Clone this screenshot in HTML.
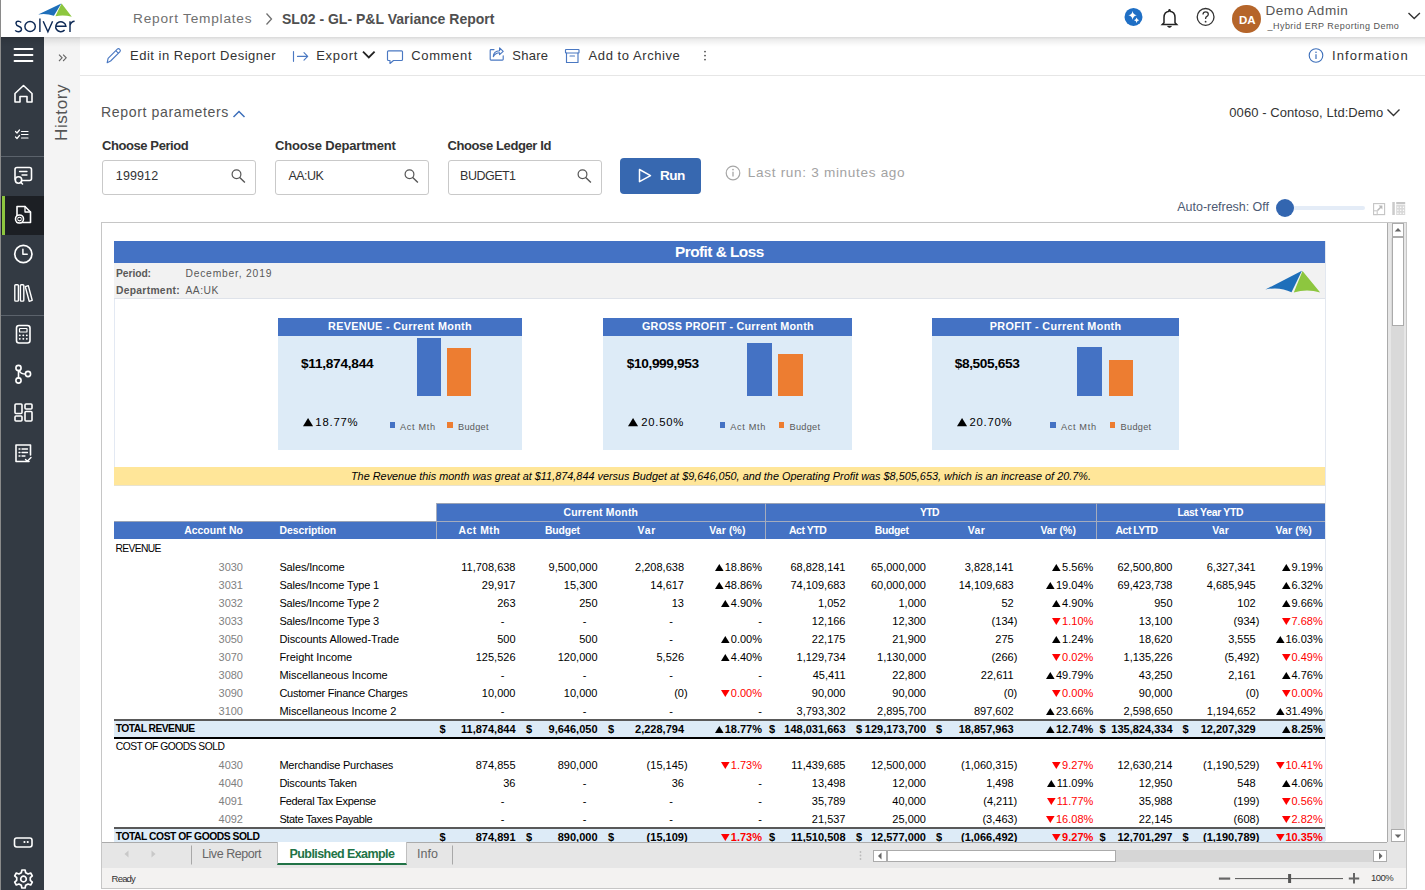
<!DOCTYPE html><html><head><meta charset="utf-8"><title>SL02 - GL- P&amp;L Variance Report</title><style>
*{margin:0;padding:0;box-sizing:border-box}
html,body{width:1425px;height:890px;overflow:hidden;background:#fff;font-family:"Liberation Sans", sans-serif;position:relative}
.t{position:absolute;white-space:nowrap}
.r{position:absolute}
svg{position:absolute;overflow:visible}
</style></head><body>
<div class="r" style="left:0px;top:0px;width:1px;height:890px;background:#8a8a8a;"></div>
<div class="r" style="left:1px;top:37px;width:43px;height:853px;background:#333a43;"></div>
<div class="r" style="left:1px;top:156px;width:43px;height:1px;background:#5b626b;"></div>
<div class="r" style="left:1px;top:315px;width:43px;height:1px;background:#5b626b;"></div>
<div class="r" style="left:1px;top:196px;width:43px;height:39px;background:#1c1f24;"></div>
<div class="r" style="left:2px;top:196px;width:3px;height:39px;background:#8dc63f;"></div>
<div class="r" style="left:44px;top:37px;width:36px;height:853px;background:#f4f4f4;"></div>
<div class="r" style="left:1px;top:0px;width:1424px;height:37px;background:#fff;"></div>
<div class="r" style="left:1px;top:37px;width:1424px;height:10px;background:linear-gradient(rgba(0,0,0,0.15),rgba(0,0,0,0.075) 25%,rgba(0,0,0,0.02) 75%,rgba(0,0,0,0));"></div>
<svg style="left:0px;top:0px;" width="44" height="890" viewBox="0 0 44 890">
<g stroke="#fff" fill="none" stroke-width="1.6" stroke-linecap="round" stroke-linejoin="round">
<path d="M14.5 49H32.5M14.5 55H32.5M14.5 61H32.5" stroke-width="1.8"/>
<path d="M15 93.5L23.5 85.5L32 93.5V102H27V96.5H20V102H15Z"/>
<path d="M15.5 131.5L17 133L19.5 130M15.5 137L17 138.5L19.5 135.5M21.5 131.5H28M21.5 134.5H28M21.5 138H28" stroke-width="1.2"/>
<rect x="15" y="167.5" width="16.5" height="13" rx="2"/>
<path d="M19.5 171.5H27M22 175H27" stroke-width="1.3"/>
<circle cx="18.5" cy="180" r="3.2" fill="#333a43"/>
<path d="M20.8 182.3L22.5 184"/>
<path d="M17 222.5V206.5H25L30.5 212V222.5Z"/>
<path d="M25 206.5V212H30.5" stroke-width="1.3"/>
<circle cx="19.5" cy="219" r="4" fill="#1c1f24"/>
<path d="M17.8 218.3A2 2 0 0 1 21.3 218.3M21.3 219.8A2 2 0 0 1 17.8 219.8" stroke-width="1.1"/>
<circle cx="23.35" cy="254" r="8.6" stroke-width="1.7"/>
<path d="M22.9 249.2V254.3H27.2" stroke-width="1.5"/>
<rect x="14.8" y="284.7" width="3.6" height="16.4" rx="0.9" stroke-width="1.4"/>
<rect x="20.4" y="284.7" width="3.4" height="16.4" rx="0.9" stroke-width="1.4"/>
<path d="M25.3 286.6L28.3 285.6L32.2 300.3L29.2 301.3Z" stroke-width="1.4"/>
<rect x="16.5" y="325.5" width="13.5" height="17.5" rx="2.5"/>
<rect x="19.5" y="328.5" width="7.5" height="3.5" rx="0.6" stroke-width="1.2"/>
<path d="M19.7 335.3H19.9M23.2 335.3H23.4M26.7 335.3H26.9M19.7 338.8H19.9M23.2 338.8H23.4M26.7 338.8H26.9" stroke-width="1.7"/>
<circle cx="18.5" cy="368" r="2.6"/>
<circle cx="18.5" cy="380.5" r="2.6"/>
<circle cx="28" cy="374" r="2.6"/>
<path d="M18.5 370.6V377.9M19.8 371.5Q21 374 25.4 374"/>
<rect x="15" y="404" width="7" height="9.5" rx="1"/>
<rect x="15" y="416" width="7" height="5" rx="1"/>
<rect x="25" y="404" width="7" height="5" rx="1"/>
<rect x="25" y="411.5" width="7" height="9.5" rx="1"/>
<path d="M29 461.5H16V445H30.5V455" />
<path d="M19 449H20M22 449H27.5M19 452.5H20M22 452.5H27.5M19 456H20M22 456H25" stroke-width="1.3"/>
<path d="M25.5 459.5L27.3 461.3L31 457.5" stroke-width="1.4"/>
<rect x="14.5" y="838" width="17.5" height="9" rx="2.2"/>
<path d="M24.3 842H24.6M27.6 842H27.9" stroke-width="1.8"/>
</g>
<g transform="translate(23.5 879)">
<path fill="none" stroke="#fff" stroke-width="1.7" stroke-linejoin="round" d="M-1.6 -9 H1.6 L2.2 -6.3 L4.6 -5 L7.2 -6 L8.8 -3.2 L6.8 -1.3 V1.3 L8.8 3.2 L7.2 6 L4.6 5 L2.2 6.3 L1.6 9 H-1.6 L-2.2 6.3 L-4.6 5 L-7.2 6 L-8.8 3.2 L-6.8 1.3 V-1.3 L-8.8 -3.2 L-7.2 -6 L-4.6 -5 L-2.2 -6.3 Z"/>
<circle r="2.8" fill="none" stroke="#fff" stroke-width="1.7"/>
</g>
</svg>
<svg style="left:57px;top:51.5px;" width="12" height="12" viewBox="0 0 12 12"><path d="M2 2.6L5.1 5.8L2 9M6.1 2.6L9.2 5.8L6.1 9" stroke="#666" fill="none" stroke-width="1.1"/></svg>
<div class="t" style="left:47px;top:141px;width:30px;height:0;"><div style="position:absolute;left:0;top:0;transform:rotate(-90deg);transform-origin:0 0;font-size:17px;color:#555;line-height:30px;letter-spacing:0.6px">History</div></div>
<svg style="left:0px;top:0px;" width="80" height="37" viewBox="0 0 80 37">
<path d="M38.2 14.6 L61.3 3.4 L53.9 15.8 Q46 13.2 38.2 14.6Z" fill="#1e6fba"/>
<path d="M61.6 3.6 L71.8 16.8 Q63.5 14.6 55.4 16.3Z" fill="#8dc63f"/>
<g fill="none" stroke="#0e2a56" stroke-width="1.45">
<path d="M21.2 22.6 Q19.8 21.1 18.2 21.1 Q16 21.2 16 23.5 Q16.2 25.4 18.6 26.2 Q21.6 27.2 21.5 29.4 Q21.2 31.8 18.4 31.8 Q16.3 31.8 15.2 30.4"/>
<ellipse cx="30.1" cy="26.5" rx="5.2" ry="5"/>
<path d="M39.9 18.4V31.9"/>
<path d="M43.2 21.3L47.9 31.7L52.6 21.3"/>
<path d="M55.9 26.3H65.9A5.1 5 0 1 0 64.6 30.1"/>
<path d="M70 21.2V31.9M70 25.5Q71.2 21.4 74.6 21.3"/>
</g>
</svg>
<div class="t" style="top:8.85px;font-size:13.7px;font-weight:400;color:#707070;line-height:20px;letter-spacing:0.772px;left:133.00px;">Report Templates</div>
<svg style="left:264px;top:12px;" width="10" height="14" viewBox="0 0 10 14"><path d="M2.5 1.5L7.5 7L2.5 12.5" stroke="#707070" fill="none" stroke-width="1.3"/></svg>
<div class="t" style="top:8.85px;font-size:14px;font-weight:700;color:#4f4f4f;line-height:20px;letter-spacing:0.010px;left:282.00px;">SL02 - GL- P&amp;L Variance Report</div>
<svg style="left:1120px;top:0px;" width="100" height="37" viewBox="0 0 100 37">
<circle cx="13.5" cy="16.9" r="9" fill="#1f6fc5"/>
<path fill="#fff" d="M12.6 10.9 Q13.2 14.6 16.8 15.3 Q13.2 16 12.6 19.7 Q12 16 8.4 15.3 Q12 14.6 12.6 10.9Z"/>
<path fill="#fff" d="M16.6 17.5 Q17 19.8 19.2 20.2 Q17 20.6 16.6 22.9 Q16.2 20.6 14 20.2 Q16.2 19.8 16.6 17.5Z"/>
<path fill="none" stroke="#222" stroke-width="1.5" d="M49.3 11.2 Q44 11.7 44 17.5 V22.7 L42.3 24.4 H56.7 L55 22.7 V17.5 Q55 11.7 49.7 11.2"/>
<circle cx="49.5" cy="10.3" r="1.2" fill="#222"/>
<path d="M47.6 26.4 Q49.5 28.2 51.4 26.4Z" fill="#222" stroke="#222" stroke-width="1"/>
<circle cx="85.6" cy="16.9" r="8.4" fill="none" stroke="#333" stroke-width="1.3"/>
<path d="M83 14.5 Q83 11.8 85.7 11.8 Q88.3 11.8 88.3 14.2 Q88.3 15.8 86.6 16.6 Q85.6 17.2 85.6 18.5V19" fill="none" stroke="#333" stroke-width="1.3"/>
<circle cx="85.6" cy="21.7" r="0.9" fill="#333"/>
</svg>
<div class="r" style="left:1232.3px;top:4.7px;width:28.6px;height:28.6px;border-radius:50%;background:#b5652a"></div>
<div class="t" style="top:10.00px;font-size:11.5px;font-weight:700;color:#fff;line-height:20px;left:847.30px;width:800px;text-align:center;">DA</div>
<div class="t" style="top:0.90px;font-size:13.5px;font-weight:400;color:#555;line-height:20px;letter-spacing:0.553px;left:1265.50px;">Demo Admin</div>
<div class="t" style="top:16.40px;font-size:9px;font-weight:400;color:#555;line-height:20px;letter-spacing:0.458px;left:1267.50px;">_Hybrid ERP Reporting Demo</div>
<svg style="left:1404px;top:10px;" width="18" height="12" viewBox="0 0 18 12"><path d="M4.5 3L10.2 8.6L15.9 3" stroke="#333" fill="none" stroke-width="1.4"/></svg>
<div class="r" style="left:80px;top:75px;width:1345px;height:1px;background:#e6e6e6;"></div>
<svg style="left:100px;top:40px;" width="620" height="30" viewBox="0 0 620 30"><g stroke="#4a78c2" fill="none" stroke-width="1.15" stroke-linecap="round" stroke-linejoin="round">
<path d="M7.2 22.7 L8.1 18.4 L17.3 9.2 Q18.5 8 19.8 9.3 Q21 10.6 19.8 11.8 L10.6 21 Z M15.8 10.7 L18.3 13.2"/>
<path d="M193.5 11.5V21.3M197.5 16.4H207.5M204 12.7L207.7 16.4L204 20.1"/>
<path d="M288.5 10.8 H301.5 Q302.5 10.8 302.5 11.8 V19.5 Q302.5 20.5 301.5 20.5 H293.5 L290 23.5 V20.5 H288.5 Q287.5 20.5 287.5 19.5 V11.8 Q287.5 10.8 288.5 10.8Z"/>
<path d="M394 9.6 H391 Q390.2 9.6 390.2 10.4 V19.3 Q390.2 20.1 391 20.1 H402.4 Q403.2 20.1 403.2 19.3 V15.8"/>
<path d="M393.3 16.6 Q393.5 10.9 399.6 10.7 V7.9 L403.2 11.3 L399.6 14.7 V12.7 Q395.6 12.7 393.3 16.6Z"/>
<rect x="465.5" y="9.5" width="13.5" height="3.5" rx="0.5"/>
<path d="M466.5 13 V22.5 H478 V13 M470 16 H474.5"/>
</g>
<path d="M263 11.6L268.8 17.4L274.6 11.6" stroke="#222" fill="none" stroke-width="1.8"/>
<circle cx="605" cy="11.6" r="0.95" fill="#555"/><circle cx="605" cy="15.6" r="0.95" fill="#555"/><circle cx="605" cy="19.6" r="0.95" fill="#555"/>
</svg>
<div class="t" style="top:45.50px;font-size:13px;font-weight:400;color:#333;line-height:20px;letter-spacing:0.510px;left:130.00px;">Edit in Report Designer</div>
<div class="t" style="top:45.50px;font-size:13px;font-weight:400;color:#333;line-height:20px;letter-spacing:0.728px;left:316.20px;">Export</div>
<div class="t" style="top:45.50px;font-size:13px;font-weight:400;color:#333;line-height:20px;letter-spacing:0.661px;left:411.20px;">Comment</div>
<div class="t" style="top:45.50px;font-size:13px;font-weight:400;color:#333;line-height:20px;letter-spacing:0.260px;left:512.30px;">Share</div>
<div class="t" style="top:45.50px;font-size:13px;font-weight:400;color:#333;line-height:20px;letter-spacing:0.568px;left:588.60px;">Add to Archive</div>
<svg style="left:1300px;top:40px;" width="30" height="30" viewBox="0 0 30 30"><circle cx="16" cy="15.5" r="6.8" fill="none" stroke="#3d6fba" stroke-width="1.1"/><path d="M16 14.3V19" stroke="#3d6fba" stroke-width="1.2"/><circle cx="16" cy="12.3" r="0.8" fill="#3d6fba"/></svg>
<div class="t" style="top:45.50px;font-size:13px;font-weight:400;color:#333;line-height:20px;letter-spacing:1.060px;left:1332.00px;">Information</div>
<div class="t" style="top:102.05px;font-size:14.1px;font-weight:400;color:#555;line-height:20px;letter-spacing:0.616px;left:101.00px;">Report parameters</div>
<svg style="left:230px;top:105px;" width="20" height="16" viewBox="0 0 20 16"><path d="M3.5 12L9 6.5L14.5 12" stroke="#3d6fba" fill="none" stroke-width="1.5"/></svg>
<div class="t" style="top:103.35px;font-size:13px;font-weight:400;color:#333;line-height:20px;letter-spacing:0.063px;left:1229.30px;">0060 - Contoso, Ltd:Demo</div>
<svg style="left:1385px;top:105px;" width="20" height="16" viewBox="0 0 20 16"><path d="M2.5 4.5L8.5 10.5L14.5 4.5" stroke="#333" fill="none" stroke-width="1.4"/></svg>
<div class="t" style="top:136.20px;font-size:13px;font-weight:700;color:#333;line-height:20px;letter-spacing:-0.416px;left:102.00px;">Choose Period</div>
<div class="r" style="left:102px;top:159.5px;width:153.5px;height:35px;border:1px solid #c9c9c9;border-radius:3px;background:#fff"></div>
<div class="t" style="top:166.40px;font-size:12.5px;font-weight:400;color:#333;line-height:20px;letter-spacing:0.128px;left:115.80px;">199912</div>
<svg style="left:227.5px;top:165px;" width="20" height="22" viewBox="0 0 20 22"><circle cx="8.5" cy="9.3" r="4.4" fill="none" stroke="#555" stroke-width="1.2"/><path d="M11.7 12.5L16.9 17.5" stroke="#555" stroke-width="1.4"/></svg>
<div class="t" style="top:136.20px;font-size:13px;font-weight:700;color:#333;line-height:20px;letter-spacing:-0.162px;left:275.00px;">Choose Department</div>
<div class="r" style="left:275px;top:159.5px;width:153.5px;height:35px;border:1px solid #c9c9c9;border-radius:3px;background:#fff"></div>
<div class="t" style="top:166.40px;font-size:12.5px;font-weight:400;color:#333;line-height:20px;letter-spacing:-0.519px;left:288.40px;">AA:UK</div>
<svg style="left:400.5px;top:165px;" width="20" height="22" viewBox="0 0 20 22"><circle cx="8.5" cy="9.3" r="4.4" fill="none" stroke="#555" stroke-width="1.2"/><path d="M11.7 12.5L16.9 17.5" stroke="#555" stroke-width="1.4"/></svg>
<div class="t" style="top:136.20px;font-size:13px;font-weight:700;color:#333;line-height:20px;letter-spacing:-0.397px;left:447.50px;">Choose Ledger Id</div>
<div class="r" style="left:447.5px;top:159.5px;width:154px;height:35px;border:1px solid #c9c9c9;border-radius:3px;background:#fff"></div>
<div class="t" style="top:166.40px;font-size:12.5px;font-weight:400;color:#333;line-height:20px;letter-spacing:-0.515px;left:460.10px;">BUDGET1</div>
<svg style="left:573.5px;top:165px;" width="20" height="22" viewBox="0 0 20 22"><circle cx="8.5" cy="9.3" r="4.4" fill="none" stroke="#555" stroke-width="1.2"/><path d="M11.7 12.5L16.9 17.5" stroke="#555" stroke-width="1.4"/></svg>
<div class="r" style="left:620px;top:158px;width:81px;height:36px;border-radius:4px;background:#3768b0"></div>
<svg style="left:620px;top:158px;" width="81" height="36" viewBox="0 0 81 36"><path d="M19.5 11.5 L30.5 17.6 L19.5 23.7 Z" fill="none" stroke="#fff" stroke-width="1.5" stroke-linejoin="round"/></svg>
<div class="t" style="top:165.60px;font-size:13.6px;font-weight:700;color:#fff;line-height:20px;letter-spacing:-0.560px;left:660.00px;">Run</div>
<svg style="left:720px;top:160px;" width="30" height="30" viewBox="0 0 30 30"><circle cx="13" cy="13" r="6.8" fill="none" stroke="#a6a6a6" stroke-width="1.2"/><path d="M13 11.8V16.5" stroke="#a6a6a6" stroke-width="1.3"/><circle cx="13" cy="9.6" r="0.85" fill="#a6a6a6"/></svg>
<div class="t" style="top:163.05px;font-size:13.6px;font-weight:400;color:#a3a3a3;line-height:20px;letter-spacing:0.673px;left:747.80px;">Last run: 3 minutes ago</div>
<div class="t" style="top:197.35px;font-size:12.5px;font-weight:400;color:#4d5a73;line-height:20px;letter-spacing:-0.031px;left:1177.30px;">Auto-refresh: Off</div>
<div class="r" style="left:1289px;top:206px;width:76px;height:4px;background:#e4ecf7;border-radius:2px"></div>
<div class="r" style="left:1276px;top:199px;width:18px;height:18px;border-radius:50%;background:#3366b0"></div>
<svg style="left:1360px;top:190px;" width="60" height="30" viewBox="0 0 60 30"><rect x="13.6" y="13.6" width="11" height="11" fill="none" stroke="#c4c4c4" stroke-width="1.1"/>
<rect x="13.6" y="20.8" width="3.6" height="3.8" fill="#fff" stroke="#c4c4c4" stroke-width="1"/>
<path d="M17.5 20.5L21.2 16.8" stroke="#b8b8b8" stroke-width="1.5"/><path d="M18.6 15.6H22.4V19.4Z" fill="#b8b8b8"/>
<rect x="32.3" y="12" width="2.5" height="13" fill="#cbcbcb"/>
<rect x="36.2" y="12" width="9" height="2.3" fill="#c6c6c6"/>
<rect x="36.2" y="15" width="9" height="10" fill="#d9d9d9"/>
<g fill="#fff"><circle cx="37.9" cy="17.3" r="0.7"/><circle cx="40.7" cy="17.3" r="0.7"/><circle cx="43.5" cy="17.3" r="0.7"/><circle cx="37.9" cy="20.3" r="0.7"/><circle cx="40.7" cy="20.3" r="0.7"/><circle cx="43.5" cy="20.3" r="0.7"/><circle cx="37.9" cy="23.3" r="0.7"/><circle cx="40.7" cy="23.3" r="0.7"/><circle cx="43.5" cy="23.3" r="0.7"/></g></svg>
<div class="r" style="left:101px;top:222px;width:1306px;height:667px;border:1px solid #c6c6c6;background:#fff"></div>
<div class="r" style="left:1387px;top:223px;width:19px;height:620px;background:#e6e6e6;"></div>
<div class="r" style="left:1387px;top:223px;width:1px;height:619px;background:#ababab;"></div>
<div class="r" style="left:1391px;top:238px;width:13px;height:591px;background:#d9d9d9;"></div>
<div class="r" style="left:1391.5px;top:223px;width:12.5px;height:14px;border:1px solid #ababab;border-top-width:1.5px;border-bottom-width:1.5px;background:#fff"></div>
<div class="r" style="left:1391.5px;top:237px;width:12.5px;height:89px;border:1px solid #ababab;border-top-width:1.5px;background:#fff"></div>
<div class="r" style="left:1391px;top:829px;width:13.5px;height:13px;border:1px solid #ababab;background:#fff"></div>
<svg style="left:1391px;top:223px;" width="14" height="620" viewBox="0 0 14 620"><path d="M3.7 8.5L7 5L10.3 8.5Z" fill="#666"/><path d="M3.7 611.5L7 615L10.3 611.5Z" fill="#666"/></svg>
<div class="r" style="left:102px;top:842px;width:1285px;height:1px;background:#ababab;"></div>
<div class="r" style="left:102px;top:843px;width:1304px;height:25px;background:#e6e6e6;"></div>
<svg style="left:102px;top:842px;" width="380" height="25" viewBox="0 0 380 25"><path d="M26.5 8.5L22.5 12L26.5 15.5Z" fill="#c8c8c8"/><path d="M49.5 8.5L53.5 12L49.5 15.5Z" fill="#c8c8c8"/><path d="M89.5 3.5V22.5" stroke="#a8a8a8" stroke-width="1"/><path d="M350.5 3.5V22.5" stroke="#a8a8a8" stroke-width="1"/></svg>
<div class="r" style="left:277px;top:841px;width:130px;height:24px;background:#fff;border-left:1px solid #c0c0c0;border-right:1px solid #c0c0c0;border-bottom:2px solid #217346"></div>
<div class="t" style="top:843.80px;font-size:12.5px;font-weight:400;color:#666;line-height:20px;letter-spacing:-0.445px;left:202.00px;">Live Report</div>
<div class="t" style="top:843.80px;font-size:12.5px;font-weight:700;color:#217346;line-height:20px;letter-spacing:-0.573px;left:289.50px;">Published Example</div>
<div class="t" style="top:843.80px;font-size:12.5px;font-weight:400;color:#666;line-height:20px;letter-spacing:0.034px;left:417.00px;">Info</div>
<svg style="left:855px;top:849px;" width="10" height="14" viewBox="0 0 10 14"><circle cx="5.5" cy="3" r="0.9" fill="#bbb"/><circle cx="5.5" cy="6.5" r="0.9" fill="#bbb"/><circle cx="5.5" cy="10" r="0.9" fill="#bbb"/></svg>
<div class="r" style="left:873px;top:849.5px;width:514px;height:12.5px;background:#d6d6d6;"></div>
<div class="r" style="left:873px;top:849.5px;width:13.5px;height:12.5px;border:1px solid #ababab;background:#fff"></div>
<div class="r" style="left:886.5px;top:849.5px;width:229.5px;height:12.5px;border:1px solid #ababab;background:#fff"></div>
<div class="r" style="left:1373px;top:849.5px;width:13.5px;height:12.5px;border:1px solid #ababab;background:#fff"></div>
<svg style="left:873px;top:849px;" width="514" height="14" viewBox="0 0 514 14"><path d="M8.5 3.5L5 7L8.5 10.5Z" fill="#666"/><path d="M506 3.5L509.5 7L506 10.5Z" fill="#666"/></svg>
<div class="r" style="left:102px;top:868px;width:1304px;height:20px;background:#f3f2f1;"></div>
<div class="t" style="top:868.60px;font-size:9.5px;font-weight:400;color:#333;line-height:20px;letter-spacing:-0.803px;left:111.60px;">Ready</div>
<svg style="left:1210px;top:867px;" width="150" height="21" viewBox="0 0 150 21"><path d="M8.9 11.6H20.2" stroke="#666" stroke-width="2.2"/><path d="M25 11.6H133" stroke="#555" stroke-width="1"/><path d="M79.6 7V16" stroke="#555" stroke-width="3"/><path d="M138.8 11.6H149.2M144 6V16.4" stroke="#666" stroke-width="2"/></svg>
<div class="t" style="top:868.45px;font-size:9.5px;font-weight:400;color:#333;line-height:20px;letter-spacing:-0.550px;left:1371.00px;">100%</div>
<div style="position:absolute;left:0;top:0;width:1387px;height:842px;overflow:hidden">
<div class="r" style="left:114px;top:241px;width:1211px;height:22px;background:#4472c4;"></div>
<div class="t" style="top:242.40px;font-size:15.4px;font-weight:700;color:#fff;line-height:20px;letter-spacing:-0.543px;left:319.36px;width:800px;text-align:center;">Profit &amp; Loss</div>
<div class="r" style="left:114px;top:263px;width:1211px;height:36px;background:#f2f2f2;"></div>
<div class="r" style="left:114px;top:298px;width:1211px;height:1px;background:#dfe3ea;"></div>
<div class="r" style="left:1325px;top:241px;width:1px;height:600px;background:#e3e8f0;"></div>
<div class="r" style="left:114px;top:299px;width:1px;height:168px;background:#e3e9f3;"></div>
<div class="t" style="top:263.90px;font-size:10.3px;font-weight:700;color:#595959;line-height:20px;letter-spacing:-0.074px;left:116.00px;">Period:</div>
<div class="t" style="top:263.90px;font-size:10.3px;font-weight:400;color:#595959;line-height:20px;letter-spacing:0.805px;left:185.40px;">December, 2019</div>
<div class="t" style="top:281.10px;font-size:10.3px;font-weight:700;color:#595959;line-height:20px;letter-spacing:0.298px;left:116.00px;">Department:</div>
<div class="t" style="top:281.10px;font-size:10.3px;font-weight:400;color:#595959;line-height:20px;letter-spacing:0.542px;left:185.40px;">AA:UK</div>
<svg style="left:1260px;top:265px;" width="70" height="32" viewBox="0 0 70 32">
<path d="M5.4 24.5 L41.9 5.7 L31.5 27.3 Q20 21.5 5.4 24.5Z" fill="#1e6fba"/>
<path d="M42.5 6 L60.2 27.6 Q47 23.5 33.8 27.6Z" fill="#8dc63f"/>
</svg>
<div class="r" style="left:277.5px;top:317.5px;width:244.5px;height:18px;background:#4472c4;"></div>
<div class="r" style="left:277.5px;top:335.5px;width:244.5px;height:114px;background:#ddebf7;"></div>
<div class="t" style="top:316.00px;font-size:10.8px;font-weight:700;color:#fff;line-height:20px;letter-spacing:0.338px;left:-0.03px;width:800px;text-align:center;">REVENUE - Current Month</div>
<div class="t" style="top:354.30px;font-size:13.7px;font-weight:700;color:#000;line-height:20px;letter-spacing:-0.275px;left:301.00px;">$11,874,844</div>
<svg style="left:302.8px;top:417.7px;" width="11" height="9" viewBox="0 0 11 9"><path d="M0 8.2L5.05 0L10.1 8.2Z" fill="#000"/></svg>
<div class="t" style="top:411.80px;font-size:11.3px;font-weight:400;color:#000;line-height:20px;letter-spacing:0.806px;left:315.30px;">18.77%</div>
<div class="r" style="left:416.5px;top:337.5px;width:24.0px;height:58.5px;background:#4472c4;"></div>
<div class="r" style="left:447px;top:348.3px;width:24px;height:47.69999999999999px;background:#ed7d31;"></div>
<div class="r" style="left:389.5px;top:422px;width:5.5px;height:5.5px;background:#4472c4;"></div>
<div class="t" style="top:416.90px;font-size:9.2px;font-weight:400;color:#595959;line-height:20px;letter-spacing:0.661px;left:400.00px;">Act Mth</div>
<div class="r" style="left:447px;top:422px;width:5.5px;height:5.5px;background:#ed7d31;"></div>
<div class="t" style="top:416.90px;font-size:9.2px;font-weight:400;color:#595959;line-height:20px;letter-spacing:0.287px;left:458.00px;">Budget</div>
<div class="r" style="left:603px;top:317.5px;width:249px;height:18px;background:#4472c4;"></div>
<div class="r" style="left:603px;top:335.5px;width:249px;height:114px;background:#ddebf7;"></div>
<div class="t" style="top:316.00px;font-size:10.8px;font-weight:700;color:#fff;line-height:20px;letter-spacing:0.224px;left:327.91px;width:800px;text-align:center;">GROSS PROFIT - Current Month</div>
<div class="t" style="top:354.30px;font-size:13.7px;font-weight:700;color:#000;line-height:20px;letter-spacing:-0.390px;left:626.80px;">$10,999,953</div>
<svg style="left:628.4px;top:417.7px;" width="11" height="9" viewBox="0 0 11 9"><path d="M0 8.2L5.05 0L10.1 8.2Z" fill="#000"/></svg>
<div class="t" style="top:411.80px;font-size:11.3px;font-weight:400;color:#000;line-height:20px;letter-spacing:0.746px;left:641.30px;">20.50%</div>
<div class="r" style="left:747px;top:343px;width:24.5px;height:53px;background:#4472c4;"></div>
<div class="r" style="left:778px;top:353.6px;width:24.700000000000045px;height:42.39999999999998px;background:#ed7d31;"></div>
<div class="r" style="left:719.8px;top:422px;width:5.5px;height:5.5px;background:#4472c4;"></div>
<div class="t" style="top:416.90px;font-size:9.2px;font-weight:400;color:#595959;line-height:20px;letter-spacing:0.661px;left:730.30px;">Act Mth</div>
<div class="r" style="left:778.5px;top:422px;width:5.5px;height:5.5px;background:#ed7d31;"></div>
<div class="t" style="top:416.90px;font-size:9.2px;font-weight:400;color:#595959;line-height:20px;letter-spacing:0.287px;left:789.50px;">Budget</div>
<div class="r" style="left:931.7px;top:317.5px;width:247.0px;height:18px;background:#4472c4;"></div>
<div class="r" style="left:931.7px;top:335.5px;width:247.0px;height:114px;background:#ddebf7;"></div>
<div class="t" style="top:316.00px;font-size:10.8px;font-weight:700;color:#fff;line-height:20px;letter-spacing:0.374px;left:655.68px;width:800px;text-align:center;">PROFIT - Current Month</div>
<div class="t" style="top:354.30px;font-size:13.7px;font-weight:700;color:#000;line-height:20px;letter-spacing:-0.366px;left:954.70px;">$8,505,653</div>
<svg style="left:956.5px;top:417.7px;" width="11" height="9" viewBox="0 0 11 9"><path d="M0 8.2L5.05 0L10.1 8.2Z" fill="#000"/></svg>
<div class="t" style="top:411.80px;font-size:11.3px;font-weight:400;color:#000;line-height:20px;letter-spacing:0.706px;left:969.60px;">20.70%</div>
<div class="r" style="left:1077px;top:347px;width:24.799999999999955px;height:49px;background:#4472c4;"></div>
<div class="r" style="left:1108.5px;top:360px;width:24.799999999999955px;height:36px;background:#ed7d31;"></div>
<div class="r" style="left:1050.4px;top:422px;width:5.5px;height:5.5px;background:#4472c4;"></div>
<div class="t" style="top:416.90px;font-size:9.2px;font-weight:400;color:#595959;line-height:20px;letter-spacing:0.661px;left:1060.90px;">Act Mth</div>
<div class="r" style="left:1109.6px;top:422px;width:5.5px;height:5.5px;background:#ed7d31;"></div>
<div class="t" style="top:416.90px;font-size:9.2px;font-weight:400;color:#595959;line-height:20px;letter-spacing:0.287px;left:1120.60px;">Budget</div>
<div class="r" style="left:114px;top:467px;width:1211px;height:18px;background:#ffe699;"></div>
<div class="r" style="left:114px;top:485px;width:1211px;height:1px;background:#e8e3d0;"></div>
<div class="t" style="top:466.30px;font-size:10.87px;font-weight:400;color:#000;line-height:20px;letter-spacing:0.009px;font-style:italic;left:321.01px;width:800px;text-align:center;">The Revenue this month was great at $11,874,844 versus Budget at $9,646,050, and the Operating Profit was $8,505,653, which is an increase of 20.7%.</div>
<div class="r" style="left:436px;top:503px;width:889px;height:36px;background:#4472c4;"></div>
<div class="r" style="left:114px;top:521px;width:322px;height:18px;background:#4472c4;"></div>
<div class="r" style="left:436px;top:503px;width:889px;height:1px;background:#9aa3b5;"></div>
<div class="r" style="left:114px;top:521px;width:322px;height:1px;background:#9aa3b5;"></div>
<div class="r" style="left:436px;top:521px;width:889px;height:1px;background:#a5acbd;"></div>
<div class="r" style="left:435.5px;top:503px;width:1px;height:36px;background:#a5acbd;"></div>
<div class="r" style="left:764.5px;top:503px;width:1px;height:36px;background:#a5acbd;"></div>
<div class="r" style="left:1095.5px;top:503px;width:1px;height:36px;background:#a5acbd;"></div>
<div class="t" style="top:503.00px;font-size:10.4px;font-weight:700;color:#fff;line-height:20px;letter-spacing:0.240px;left:200.84px;width:800px;text-align:center;">Current Month</div>
<div class="t" style="top:503.00px;font-size:10.4px;font-weight:700;color:#fff;line-height:20px;letter-spacing:-0.589px;left:529.51px;width:800px;text-align:center;">YTD</div>
<div class="t" style="top:503.00px;font-size:10.4px;font-weight:700;color:#fff;line-height:20px;letter-spacing:-0.289px;left:810.36px;width:800px;text-align:center;">Last Year YTD</div>
<div class="t" style="top:520.90px;font-size:10.4px;font-weight:700;color:#fff;line-height:20px;letter-spacing:0.039px;left:184.20px;">Account No</div>
<div class="t" style="top:520.90px;font-size:10.4px;font-weight:700;color:#fff;line-height:20px;letter-spacing:-0.061px;left:279.60px;">Description</div>
<div class="t" style="top:520.90px;font-size:10.4px;font-weight:700;color:#fff;line-height:20px;letter-spacing:0.509px;left:458.50px;">Act Mth</div>
<div class="t" style="top:520.90px;font-size:10.4px;font-weight:700;color:#fff;line-height:20px;letter-spacing:-0.165px;left:545.00px;">Budget</div>
<div class="t" style="top:520.90px;font-size:10.4px;font-weight:700;color:#fff;line-height:20px;letter-spacing:0.732px;left:637.60px;">Var</div>
<div class="t" style="top:520.90px;font-size:10.4px;font-weight:700;color:#fff;line-height:20px;letter-spacing:0.173px;left:709.20px;">Var (%)</div>
<div class="t" style="top:520.90px;font-size:10.4px;font-weight:700;color:#fff;line-height:20px;letter-spacing:-0.385px;left:788.90px;">Act YTD</div>
<div class="t" style="top:520.90px;font-size:10.4px;font-weight:700;color:#fff;line-height:20px;letter-spacing:-0.325px;left:874.80px;">Budget</div>
<div class="t" style="top:520.90px;font-size:10.4px;font-weight:700;color:#fff;line-height:20px;letter-spacing:0.382px;left:967.80px;">Var</div>
<div class="t" style="top:520.90px;font-size:10.4px;font-weight:700;color:#fff;line-height:20px;letter-spacing:0.039px;left:1040.40px;">Var (%)</div>
<div class="t" style="top:520.90px;font-size:10.4px;font-weight:700;color:#fff;line-height:20px;letter-spacing:-0.486px;left:1115.60px;">Act LYTD</div>
<div class="t" style="top:520.90px;font-size:10.4px;font-weight:700;color:#fff;line-height:20px;letter-spacing:0.182px;left:1212.20px;">Var</div>
<div class="t" style="top:520.90px;font-size:10.4px;font-weight:700;color:#fff;line-height:20px;letter-spacing:0.139px;left:1275.60px;">Var (%)</div>
<div class="t" style="top:538.60px;font-size:10.3px;font-weight:400;color:#000;line-height:20px;letter-spacing:-0.619px;left:115.40px;">REVENUE</div>
<div class="t" style="top:556.80px;font-size:11px;font-weight:400;color:#7f7f7f;line-height:20px;left:-157.00px;width:400px;text-align:right;">3030</div>
<div class="t" style="top:556.80px;font-size:11px;font-weight:400;color:#000;line-height:20px;letter-spacing:-0.130px;left:279.40px;">Sales/Income</div>
<div class="t" style="top:556.80px;font-size:11px;font-weight:400;color:#000;line-height:20px;left:115.50px;width:400px;text-align:right;">11,708,638</div>
<div class="t" style="top:556.80px;font-size:11px;font-weight:400;color:#000;line-height:20px;left:197.50px;width:400px;text-align:right;">9,500,000</div>
<div class="t" style="top:556.80px;font-size:11px;font-weight:400;color:#000;line-height:20px;left:284.00px;width:400px;text-align:right;">2,208,638</div>
<div class="t" style="top:556.80px;font-size:11px;font-weight:400;color:#000;line-height:20px;left:362.00px;width:400px;text-align:right;"><svg style="position:relative;display:inline-block;vertical-align:baseline;margin-right:1.2px" width="8.6" height="7" viewBox="0 0 8.6 7"><path d="M0 7L4.3 0L8.6 7Z" fill="#000"/></svg>18.86%</div>
<div class="t" style="top:556.80px;font-size:11px;font-weight:400;color:#000;line-height:20px;left:445.50px;width:400px;text-align:right;">68,828,141</div>
<div class="t" style="top:556.80px;font-size:11px;font-weight:400;color:#000;line-height:20px;left:526.00px;width:400px;text-align:right;">65,000,000</div>
<div class="t" style="top:556.80px;font-size:11px;font-weight:400;color:#000;line-height:20px;left:613.70px;width:400px;text-align:right;">3,828,141</div>
<div class="t" style="top:556.80px;font-size:11px;font-weight:400;color:#000;line-height:20px;left:693.30px;width:400px;text-align:right;"><svg style="position:relative;display:inline-block;vertical-align:baseline;margin-right:1.2px" width="8.6" height="7" viewBox="0 0 8.6 7"><path d="M0 7L4.3 0L8.6 7Z" fill="#000"/></svg>5.56%</div>
<div class="t" style="top:556.80px;font-size:11px;font-weight:400;color:#000;line-height:20px;left:772.50px;width:400px;text-align:right;">62,500,800</div>
<div class="t" style="top:556.80px;font-size:11px;font-weight:400;color:#000;line-height:20px;left:855.70px;width:400px;text-align:right;">6,327,341</div>
<div class="t" style="top:556.80px;font-size:11px;font-weight:400;color:#000;line-height:20px;left:922.70px;width:400px;text-align:right;"><svg style="position:relative;display:inline-block;vertical-align:baseline;margin-right:1.2px" width="8.6" height="7" viewBox="0 0 8.6 7"><path d="M0 7L4.3 0L8.6 7Z" fill="#000"/></svg>9.19%</div>
<div class="t" style="top:574.80px;font-size:11px;font-weight:400;color:#7f7f7f;line-height:20px;left:-157.00px;width:400px;text-align:right;">3031</div>
<div class="t" style="top:574.80px;font-size:11px;font-weight:400;color:#000;line-height:20px;letter-spacing:-0.150px;left:279.40px;">Sales/Income Type 1</div>
<div class="t" style="top:574.80px;font-size:11px;font-weight:400;color:#000;line-height:20px;left:115.50px;width:400px;text-align:right;">29,917</div>
<div class="t" style="top:574.80px;font-size:11px;font-weight:400;color:#000;line-height:20px;left:197.50px;width:400px;text-align:right;">15,300</div>
<div class="t" style="top:574.80px;font-size:11px;font-weight:400;color:#000;line-height:20px;left:284.00px;width:400px;text-align:right;">14,617</div>
<div class="t" style="top:574.80px;font-size:11px;font-weight:400;color:#000;line-height:20px;left:362.00px;width:400px;text-align:right;"><svg style="position:relative;display:inline-block;vertical-align:baseline;margin-right:1.2px" width="8.6" height="7" viewBox="0 0 8.6 7"><path d="M0 7L4.3 0L8.6 7Z" fill="#000"/></svg>48.86%</div>
<div class="t" style="top:574.80px;font-size:11px;font-weight:400;color:#000;line-height:20px;left:445.50px;width:400px;text-align:right;">74,109,683</div>
<div class="t" style="top:574.80px;font-size:11px;font-weight:400;color:#000;line-height:20px;left:526.00px;width:400px;text-align:right;">60,000,000</div>
<div class="t" style="top:574.80px;font-size:11px;font-weight:400;color:#000;line-height:20px;left:613.70px;width:400px;text-align:right;">14,109,683</div>
<div class="t" style="top:574.80px;font-size:11px;font-weight:400;color:#000;line-height:20px;left:693.30px;width:400px;text-align:right;"><svg style="position:relative;display:inline-block;vertical-align:baseline;margin-right:1.2px" width="8.6" height="7" viewBox="0 0 8.6 7"><path d="M0 7L4.3 0L8.6 7Z" fill="#000"/></svg>19.04%</div>
<div class="t" style="top:574.80px;font-size:11px;font-weight:400;color:#000;line-height:20px;left:772.50px;width:400px;text-align:right;">69,423,738</div>
<div class="t" style="top:574.80px;font-size:11px;font-weight:400;color:#000;line-height:20px;left:855.70px;width:400px;text-align:right;">4,685,945</div>
<div class="t" style="top:574.80px;font-size:11px;font-weight:400;color:#000;line-height:20px;left:922.70px;width:400px;text-align:right;"><svg style="position:relative;display:inline-block;vertical-align:baseline;margin-right:1.2px" width="8.6" height="7" viewBox="0 0 8.6 7"><path d="M0 7L4.3 0L8.6 7Z" fill="#000"/></svg>6.32%</div>
<div class="t" style="top:592.80px;font-size:11px;font-weight:400;color:#7f7f7f;line-height:20px;left:-157.00px;width:400px;text-align:right;">3032</div>
<div class="t" style="top:592.80px;font-size:11px;font-weight:400;color:#000;line-height:20px;letter-spacing:-0.150px;left:279.40px;">Sales/Income Type 2</div>
<div class="t" style="top:592.80px;font-size:11px;font-weight:400;color:#000;line-height:20px;left:115.50px;width:400px;text-align:right;">263</div>
<div class="t" style="top:592.80px;font-size:11px;font-weight:400;color:#000;line-height:20px;left:197.50px;width:400px;text-align:right;">250</div>
<div class="t" style="top:592.80px;font-size:11px;font-weight:400;color:#000;line-height:20px;left:284.00px;width:400px;text-align:right;">13</div>
<div class="t" style="top:592.80px;font-size:11px;font-weight:400;color:#000;line-height:20px;left:362.00px;width:400px;text-align:right;"><svg style="position:relative;display:inline-block;vertical-align:baseline;margin-right:1.2px" width="8.6" height="7" viewBox="0 0 8.6 7"><path d="M0 7L4.3 0L8.6 7Z" fill="#000"/></svg>4.90%</div>
<div class="t" style="top:592.80px;font-size:11px;font-weight:400;color:#000;line-height:20px;left:445.50px;width:400px;text-align:right;">1,052</div>
<div class="t" style="top:592.80px;font-size:11px;font-weight:400;color:#000;line-height:20px;left:526.00px;width:400px;text-align:right;">1,000</div>
<div class="t" style="top:592.80px;font-size:11px;font-weight:400;color:#000;line-height:20px;left:613.70px;width:400px;text-align:right;">52</div>
<div class="t" style="top:592.80px;font-size:11px;font-weight:400;color:#000;line-height:20px;left:693.30px;width:400px;text-align:right;"><svg style="position:relative;display:inline-block;vertical-align:baseline;margin-right:1.2px" width="8.6" height="7" viewBox="0 0 8.6 7"><path d="M0 7L4.3 0L8.6 7Z" fill="#000"/></svg>4.90%</div>
<div class="t" style="top:592.80px;font-size:11px;font-weight:400;color:#000;line-height:20px;left:772.50px;width:400px;text-align:right;">950</div>
<div class="t" style="top:592.80px;font-size:11px;font-weight:400;color:#000;line-height:20px;left:855.70px;width:400px;text-align:right;">102</div>
<div class="t" style="top:592.80px;font-size:11px;font-weight:400;color:#000;line-height:20px;left:922.70px;width:400px;text-align:right;"><svg style="position:relative;display:inline-block;vertical-align:baseline;margin-right:1.2px" width="8.6" height="7" viewBox="0 0 8.6 7"><path d="M0 7L4.3 0L8.6 7Z" fill="#000"/></svg>9.66%</div>
<div class="t" style="top:610.80px;font-size:11px;font-weight:400;color:#7f7f7f;line-height:20px;left:-157.00px;width:400px;text-align:right;">3033</div>
<div class="t" style="top:610.80px;font-size:11px;font-weight:400;color:#000;line-height:20px;letter-spacing:-0.150px;left:279.40px;">Sales/Income Type 3</div>
<div class="t" style="top:610.80px;font-size:11px;font-weight:400;color:#000;line-height:20px;left:104.50px;width:400px;text-align:right;">-</div>
<div class="t" style="top:610.80px;font-size:11px;font-weight:400;color:#000;line-height:20px;left:186.50px;width:400px;text-align:right;">-</div>
<div class="t" style="top:610.80px;font-size:11px;font-weight:400;color:#000;line-height:20px;left:273.00px;width:400px;text-align:right;">-</div>
<div class="t" style="top:610.80px;font-size:11px;font-weight:400;color:#000;line-height:20px;left:362.00px;width:400px;text-align:right;">-</div>
<div class="t" style="top:610.80px;font-size:11px;font-weight:400;color:#000;line-height:20px;left:445.50px;width:400px;text-align:right;">12,166</div>
<div class="t" style="top:610.80px;font-size:11px;font-weight:400;color:#000;line-height:20px;left:526.00px;width:400px;text-align:right;">12,300</div>
<div class="t" style="top:610.80px;font-size:11px;font-weight:400;color:#000;line-height:20px;left:617.30px;width:400px;text-align:right;">(134)</div>
<div class="t" style="top:610.80px;font-size:11px;font-weight:400;color:#ff0000;line-height:20px;left:693.30px;width:400px;text-align:right;"><svg style="position:relative;display:inline-block;vertical-align:baseline;margin-right:1.2px" width="8.6" height="7" viewBox="0 0 8.6 7"><path d="M0 0L4.3 7L8.6 0Z" fill="#ff0000"/></svg>1.10%</div>
<div class="t" style="top:610.80px;font-size:11px;font-weight:400;color:#000;line-height:20px;left:772.50px;width:400px;text-align:right;">13,100</div>
<div class="t" style="top:610.80px;font-size:11px;font-weight:400;color:#000;line-height:20px;left:859.30px;width:400px;text-align:right;">(934)</div>
<div class="t" style="top:610.80px;font-size:11px;font-weight:400;color:#ff0000;line-height:20px;left:922.70px;width:400px;text-align:right;"><svg style="position:relative;display:inline-block;vertical-align:baseline;margin-right:1.2px" width="8.6" height="7" viewBox="0 0 8.6 7"><path d="M0 0L4.3 7L8.6 0Z" fill="#ff0000"/></svg>7.68%</div>
<div class="t" style="top:628.80px;font-size:11px;font-weight:400;color:#7f7f7f;line-height:20px;left:-157.00px;width:400px;text-align:right;">3050</div>
<div class="t" style="top:628.80px;font-size:11px;font-weight:400;color:#000;line-height:20px;letter-spacing:-0.075px;left:279.40px;">Discounts Allowed-Trade</div>
<div class="t" style="top:628.80px;font-size:11px;font-weight:400;color:#000;line-height:20px;left:115.50px;width:400px;text-align:right;">500</div>
<div class="t" style="top:628.80px;font-size:11px;font-weight:400;color:#000;line-height:20px;left:197.50px;width:400px;text-align:right;">500</div>
<div class="t" style="top:628.80px;font-size:11px;font-weight:400;color:#000;line-height:20px;left:273.00px;width:400px;text-align:right;">-</div>
<div class="t" style="top:628.80px;font-size:11px;font-weight:400;color:#000;line-height:20px;left:362.00px;width:400px;text-align:right;"><svg style="position:relative;display:inline-block;vertical-align:baseline;margin-right:1.2px" width="8.6" height="7" viewBox="0 0 8.6 7"><path d="M0 7L4.3 0L8.6 7Z" fill="#000"/></svg>0.00%</div>
<div class="t" style="top:628.80px;font-size:11px;font-weight:400;color:#000;line-height:20px;left:445.50px;width:400px;text-align:right;">22,175</div>
<div class="t" style="top:628.80px;font-size:11px;font-weight:400;color:#000;line-height:20px;left:526.00px;width:400px;text-align:right;">21,900</div>
<div class="t" style="top:628.80px;font-size:11px;font-weight:400;color:#000;line-height:20px;left:613.70px;width:400px;text-align:right;">275</div>
<div class="t" style="top:628.80px;font-size:11px;font-weight:400;color:#000;line-height:20px;left:693.30px;width:400px;text-align:right;"><svg style="position:relative;display:inline-block;vertical-align:baseline;margin-right:1.2px" width="8.6" height="7" viewBox="0 0 8.6 7"><path d="M0 7L4.3 0L8.6 7Z" fill="#000"/></svg>1.24%</div>
<div class="t" style="top:628.80px;font-size:11px;font-weight:400;color:#000;line-height:20px;left:772.50px;width:400px;text-align:right;">18,620</div>
<div class="t" style="top:628.80px;font-size:11px;font-weight:400;color:#000;line-height:20px;left:855.70px;width:400px;text-align:right;">3,555</div>
<div class="t" style="top:628.80px;font-size:11px;font-weight:400;color:#000;line-height:20px;left:922.70px;width:400px;text-align:right;"><svg style="position:relative;display:inline-block;vertical-align:baseline;margin-right:1.2px" width="8.6" height="7" viewBox="0 0 8.6 7"><path d="M0 7L4.3 0L8.6 7Z" fill="#000"/></svg>16.03%</div>
<div class="t" style="top:646.80px;font-size:11px;font-weight:400;color:#7f7f7f;line-height:20px;left:-157.00px;width:400px;text-align:right;">3070</div>
<div class="t" style="top:646.80px;font-size:11px;font-weight:400;color:#000;line-height:20px;letter-spacing:-0.042px;left:279.40px;">Freight Income</div>
<div class="t" style="top:646.80px;font-size:11px;font-weight:400;color:#000;line-height:20px;left:115.50px;width:400px;text-align:right;">125,526</div>
<div class="t" style="top:646.80px;font-size:11px;font-weight:400;color:#000;line-height:20px;left:197.50px;width:400px;text-align:right;">120,000</div>
<div class="t" style="top:646.80px;font-size:11px;font-weight:400;color:#000;line-height:20px;left:284.00px;width:400px;text-align:right;">5,526</div>
<div class="t" style="top:646.80px;font-size:11px;font-weight:400;color:#000;line-height:20px;left:362.00px;width:400px;text-align:right;"><svg style="position:relative;display:inline-block;vertical-align:baseline;margin-right:1.2px" width="8.6" height="7" viewBox="0 0 8.6 7"><path d="M0 7L4.3 0L8.6 7Z" fill="#000"/></svg>4.40%</div>
<div class="t" style="top:646.80px;font-size:11px;font-weight:400;color:#000;line-height:20px;left:445.50px;width:400px;text-align:right;">1,129,734</div>
<div class="t" style="top:646.80px;font-size:11px;font-weight:400;color:#000;line-height:20px;left:526.00px;width:400px;text-align:right;">1,130,000</div>
<div class="t" style="top:646.80px;font-size:11px;font-weight:400;color:#000;line-height:20px;left:617.30px;width:400px;text-align:right;">(266)</div>
<div class="t" style="top:646.80px;font-size:11px;font-weight:400;color:#ff0000;line-height:20px;left:693.30px;width:400px;text-align:right;"><svg style="position:relative;display:inline-block;vertical-align:baseline;margin-right:1.2px" width="8.6" height="7" viewBox="0 0 8.6 7"><path d="M0 0L4.3 7L8.6 0Z" fill="#ff0000"/></svg>0.02%</div>
<div class="t" style="top:646.80px;font-size:11px;font-weight:400;color:#000;line-height:20px;left:772.50px;width:400px;text-align:right;">1,135,226</div>
<div class="t" style="top:646.80px;font-size:11px;font-weight:400;color:#000;line-height:20px;left:859.30px;width:400px;text-align:right;">(5,492)</div>
<div class="t" style="top:646.80px;font-size:11px;font-weight:400;color:#ff0000;line-height:20px;left:922.70px;width:400px;text-align:right;"><svg style="position:relative;display:inline-block;vertical-align:baseline;margin-right:1.2px" width="8.6" height="7" viewBox="0 0 8.6 7"><path d="M0 0L4.3 7L8.6 0Z" fill="#ff0000"/></svg>0.49%</div>
<div class="t" style="top:664.80px;font-size:11px;font-weight:400;color:#7f7f7f;line-height:20px;left:-157.00px;width:400px;text-align:right;">3080</div>
<div class="t" style="top:664.80px;font-size:11px;font-weight:400;color:#000;line-height:20px;letter-spacing:-0.027px;left:279.40px;">Miscellaneous Income</div>
<div class="t" style="top:664.80px;font-size:11px;font-weight:400;color:#000;line-height:20px;left:104.50px;width:400px;text-align:right;">-</div>
<div class="t" style="top:664.80px;font-size:11px;font-weight:400;color:#000;line-height:20px;left:186.50px;width:400px;text-align:right;">-</div>
<div class="t" style="top:664.80px;font-size:11px;font-weight:400;color:#000;line-height:20px;left:273.00px;width:400px;text-align:right;">-</div>
<div class="t" style="top:664.80px;font-size:11px;font-weight:400;color:#000;line-height:20px;left:362.00px;width:400px;text-align:right;">-</div>
<div class="t" style="top:664.80px;font-size:11px;font-weight:400;color:#000;line-height:20px;left:445.50px;width:400px;text-align:right;">45,411</div>
<div class="t" style="top:664.80px;font-size:11px;font-weight:400;color:#000;line-height:20px;left:526.00px;width:400px;text-align:right;">22,800</div>
<div class="t" style="top:664.80px;font-size:11px;font-weight:400;color:#000;line-height:20px;left:613.70px;width:400px;text-align:right;">22,611</div>
<div class="t" style="top:664.80px;font-size:11px;font-weight:400;color:#000;line-height:20px;left:693.30px;width:400px;text-align:right;"><svg style="position:relative;display:inline-block;vertical-align:baseline;margin-right:1.2px" width="8.6" height="7" viewBox="0 0 8.6 7"><path d="M0 7L4.3 0L8.6 7Z" fill="#000"/></svg>49.79%</div>
<div class="t" style="top:664.80px;font-size:11px;font-weight:400;color:#000;line-height:20px;left:772.50px;width:400px;text-align:right;">43,250</div>
<div class="t" style="top:664.80px;font-size:11px;font-weight:400;color:#000;line-height:20px;left:855.70px;width:400px;text-align:right;">2,161</div>
<div class="t" style="top:664.80px;font-size:11px;font-weight:400;color:#000;line-height:20px;left:922.70px;width:400px;text-align:right;"><svg style="position:relative;display:inline-block;vertical-align:baseline;margin-right:1.2px" width="8.6" height="7" viewBox="0 0 8.6 7"><path d="M0 7L4.3 0L8.6 7Z" fill="#000"/></svg>4.76%</div>
<div class="t" style="top:682.80px;font-size:11px;font-weight:400;color:#7f7f7f;line-height:20px;left:-157.00px;width:400px;text-align:right;">3090</div>
<div class="t" style="top:682.80px;font-size:11px;font-weight:400;color:#000;line-height:20px;letter-spacing:-0.270px;left:279.40px;">Customer Finance Charges</div>
<div class="t" style="top:682.80px;font-size:11px;font-weight:400;color:#000;line-height:20px;left:115.50px;width:400px;text-align:right;">10,000</div>
<div class="t" style="top:682.80px;font-size:11px;font-weight:400;color:#000;line-height:20px;left:197.50px;width:400px;text-align:right;">10,000</div>
<div class="t" style="top:682.80px;font-size:11px;font-weight:400;color:#000;line-height:20px;left:287.60px;width:400px;text-align:right;">(0)</div>
<div class="t" style="top:682.80px;font-size:11px;font-weight:400;color:#ff0000;line-height:20px;left:362.00px;width:400px;text-align:right;"><svg style="position:relative;display:inline-block;vertical-align:baseline;margin-right:1.2px" width="8.6" height="7" viewBox="0 0 8.6 7"><path d="M0 0L4.3 7L8.6 0Z" fill="#ff0000"/></svg>0.00%</div>
<div class="t" style="top:682.80px;font-size:11px;font-weight:400;color:#000;line-height:20px;left:445.50px;width:400px;text-align:right;">90,000</div>
<div class="t" style="top:682.80px;font-size:11px;font-weight:400;color:#000;line-height:20px;left:526.00px;width:400px;text-align:right;">90,000</div>
<div class="t" style="top:682.80px;font-size:11px;font-weight:400;color:#000;line-height:20px;left:617.30px;width:400px;text-align:right;">(0)</div>
<div class="t" style="top:682.80px;font-size:11px;font-weight:400;color:#ff0000;line-height:20px;left:693.30px;width:400px;text-align:right;"><svg style="position:relative;display:inline-block;vertical-align:baseline;margin-right:1.2px" width="8.6" height="7" viewBox="0 0 8.6 7"><path d="M0 0L4.3 7L8.6 0Z" fill="#ff0000"/></svg>0.00%</div>
<div class="t" style="top:682.80px;font-size:11px;font-weight:400;color:#000;line-height:20px;left:772.50px;width:400px;text-align:right;">90,000</div>
<div class="t" style="top:682.80px;font-size:11px;font-weight:400;color:#000;line-height:20px;left:859.30px;width:400px;text-align:right;">(0)</div>
<div class="t" style="top:682.80px;font-size:11px;font-weight:400;color:#ff0000;line-height:20px;left:922.70px;width:400px;text-align:right;"><svg style="position:relative;display:inline-block;vertical-align:baseline;margin-right:1.2px" width="8.6" height="7" viewBox="0 0 8.6 7"><path d="M0 0L4.3 7L8.6 0Z" fill="#ff0000"/></svg>0.00%</div>
<div class="t" style="top:700.80px;font-size:11px;font-weight:400;color:#7f7f7f;line-height:20px;left:-157.00px;width:400px;text-align:right;">3100</div>
<div class="t" style="top:700.80px;font-size:11px;font-weight:400;color:#000;line-height:20px;letter-spacing:-0.052px;left:279.40px;">Miscellaneous Income 2</div>
<div class="t" style="top:700.80px;font-size:11px;font-weight:400;color:#000;line-height:20px;left:104.50px;width:400px;text-align:right;">-</div>
<div class="t" style="top:700.80px;font-size:11px;font-weight:400;color:#000;line-height:20px;left:186.50px;width:400px;text-align:right;">-</div>
<div class="t" style="top:700.80px;font-size:11px;font-weight:400;color:#000;line-height:20px;left:273.00px;width:400px;text-align:right;">-</div>
<div class="t" style="top:700.80px;font-size:11px;font-weight:400;color:#000;line-height:20px;left:362.00px;width:400px;text-align:right;">-</div>
<div class="t" style="top:700.80px;font-size:11px;font-weight:400;color:#000;line-height:20px;left:445.50px;width:400px;text-align:right;">3,793,302</div>
<div class="t" style="top:700.80px;font-size:11px;font-weight:400;color:#000;line-height:20px;left:526.00px;width:400px;text-align:right;">2,895,700</div>
<div class="t" style="top:700.80px;font-size:11px;font-weight:400;color:#000;line-height:20px;left:613.70px;width:400px;text-align:right;">897,602</div>
<div class="t" style="top:700.80px;font-size:11px;font-weight:400;color:#000;line-height:20px;left:693.30px;width:400px;text-align:right;"><svg style="position:relative;display:inline-block;vertical-align:baseline;margin-right:1.2px" width="8.6" height="7" viewBox="0 0 8.6 7"><path d="M0 7L4.3 0L8.6 7Z" fill="#000"/></svg>23.66%</div>
<div class="t" style="top:700.80px;font-size:11px;font-weight:400;color:#000;line-height:20px;left:772.50px;width:400px;text-align:right;">2,598,650</div>
<div class="t" style="top:700.80px;font-size:11px;font-weight:400;color:#000;line-height:20px;left:855.70px;width:400px;text-align:right;">1,194,652</div>
<div class="t" style="top:700.80px;font-size:11px;font-weight:400;color:#000;line-height:20px;left:922.70px;width:400px;text-align:right;"><svg style="position:relative;display:inline-block;vertical-align:baseline;margin-right:1.2px" width="8.6" height="7" viewBox="0 0 8.6 7"><path d="M0 7L4.3 0L8.6 7Z" fill="#000"/></svg>31.49%</div>
<div class="r" style="left:114px;top:718.5px;width:1211px;height:2px;background:#595959;"></div>
<div class="r" style="left:114px;top:720.5px;width:1211px;height:16px;background:#ddebf7;"></div>
<div class="r" style="left:114px;top:736.5px;width:1211px;height:2px;background:#000;"></div>
<div class="t" style="top:718.50px;font-size:10.3px;font-weight:700;color:#000;line-height:20px;letter-spacing:-0.545px;left:115.80px;">TOTAL REVENUE</div>
<div class="t" style="top:718.50px;font-size:11px;font-weight:700;color:#000;line-height:20px;left:115.50px;width:400px;text-align:right;">11,874,844</div>
<div class="t" style="top:718.50px;font-size:11px;font-weight:700;color:#000;line-height:20px;left:197.50px;width:400px;text-align:right;">9,646,050</div>
<div class="t" style="top:718.50px;font-size:11px;font-weight:700;color:#000;line-height:20px;left:284.00px;width:400px;text-align:right;">2,228,794</div>
<div class="t" style="top:718.50px;font-size:11px;font-weight:700;color:#000;line-height:20px;left:362.00px;width:400px;text-align:right;"><svg style="position:relative;display:inline-block;vertical-align:baseline;margin-right:1.2px" width="8.6" height="7" viewBox="0 0 8.6 7"><path d="M0 7L4.3 0L8.6 7Z" fill="#000"/></svg>18.77%</div>
<div class="t" style="top:718.50px;font-size:11px;font-weight:700;color:#000;line-height:20px;left:445.50px;width:400px;text-align:right;">148,031,663</div>
<div class="t" style="top:718.50px;font-size:11px;font-weight:700;color:#000;line-height:20px;left:526.00px;width:400px;text-align:right;">129,173,700</div>
<div class="t" style="top:718.50px;font-size:11px;font-weight:700;color:#000;line-height:20px;left:613.70px;width:400px;text-align:right;">18,857,963</div>
<div class="t" style="top:718.50px;font-size:11px;font-weight:700;color:#000;line-height:20px;left:693.30px;width:400px;text-align:right;"><svg style="position:relative;display:inline-block;vertical-align:baseline;margin-right:1.2px" width="8.6" height="7" viewBox="0 0 8.6 7"><path d="M0 7L4.3 0L8.6 7Z" fill="#000"/></svg>12.74%</div>
<div class="t" style="top:718.50px;font-size:11px;font-weight:700;color:#000;line-height:20px;left:772.50px;width:400px;text-align:right;">135,824,334</div>
<div class="t" style="top:718.50px;font-size:11px;font-weight:700;color:#000;line-height:20px;left:855.70px;width:400px;text-align:right;">12,207,329</div>
<div class="t" style="top:718.50px;font-size:11px;font-weight:700;color:#000;line-height:20px;left:922.70px;width:400px;text-align:right;"><svg style="position:relative;display:inline-block;vertical-align:baseline;margin-right:1.2px" width="8.6" height="7" viewBox="0 0 8.6 7"><path d="M0 7L4.3 0L8.6 7Z" fill="#000"/></svg>8.25%</div>
<div class="t" style="top:718.50px;font-size:11px;font-weight:700;color:#000;line-height:20px;left:439.50px;">$</div>
<div class="t" style="top:718.50px;font-size:11px;font-weight:700;color:#000;line-height:20px;left:526.00px;">$</div>
<div class="t" style="top:718.50px;font-size:11px;font-weight:700;color:#000;line-height:20px;left:608.00px;">$</div>
<div class="t" style="top:718.50px;font-size:11px;font-weight:700;color:#000;line-height:20px;left:769.00px;">$</div>
<div class="t" style="top:718.50px;font-size:11px;font-weight:700;color:#000;line-height:20px;left:856.00px;">$</div>
<div class="t" style="top:718.50px;font-size:11px;font-weight:700;color:#000;line-height:20px;left:936.00px;">$</div>
<div class="t" style="top:718.50px;font-size:11px;font-weight:700;color:#000;line-height:20px;left:1099.50px;">$</div>
<div class="t" style="top:718.50px;font-size:11px;font-weight:700;color:#000;line-height:20px;left:1182.50px;">$</div>
<div class="t" style="top:737.10px;font-size:10.3px;font-weight:400;color:#000;line-height:20px;letter-spacing:-0.507px;left:115.80px;">COST OF GOODS SOLD</div>
<div class="t" style="top:754.50px;font-size:11px;font-weight:400;color:#7f7f7f;line-height:20px;left:-157.00px;width:400px;text-align:right;">4030</div>
<div class="t" style="top:754.50px;font-size:11px;font-weight:400;color:#000;line-height:20px;letter-spacing:-0.205px;left:279.40px;">Merchandise Purchases</div>
<div class="t" style="top:754.50px;font-size:11px;font-weight:400;color:#000;line-height:20px;left:115.50px;width:400px;text-align:right;">874,855</div>
<div class="t" style="top:754.50px;font-size:11px;font-weight:400;color:#000;line-height:20px;left:197.50px;width:400px;text-align:right;">890,000</div>
<div class="t" style="top:754.50px;font-size:11px;font-weight:400;color:#000;line-height:20px;left:287.60px;width:400px;text-align:right;">(15,145)</div>
<div class="t" style="top:754.50px;font-size:11px;font-weight:400;color:#ff0000;line-height:20px;left:362.00px;width:400px;text-align:right;"><svg style="position:relative;display:inline-block;vertical-align:baseline;margin-right:1.2px" width="8.6" height="7" viewBox="0 0 8.6 7"><path d="M0 0L4.3 7L8.6 0Z" fill="#ff0000"/></svg>1.73%</div>
<div class="t" style="top:754.50px;font-size:11px;font-weight:400;color:#000;line-height:20px;left:445.50px;width:400px;text-align:right;">11,439,685</div>
<div class="t" style="top:754.50px;font-size:11px;font-weight:400;color:#000;line-height:20px;left:526.00px;width:400px;text-align:right;">12,500,000</div>
<div class="t" style="top:754.50px;font-size:11px;font-weight:400;color:#000;line-height:20px;left:617.30px;width:400px;text-align:right;">(1,060,315)</div>
<div class="t" style="top:754.50px;font-size:11px;font-weight:400;color:#ff0000;line-height:20px;left:693.30px;width:400px;text-align:right;"><svg style="position:relative;display:inline-block;vertical-align:baseline;margin-right:1.2px" width="8.6" height="7" viewBox="0 0 8.6 7"><path d="M0 0L4.3 7L8.6 0Z" fill="#ff0000"/></svg>9.27%</div>
<div class="t" style="top:754.50px;font-size:11px;font-weight:400;color:#000;line-height:20px;left:772.50px;width:400px;text-align:right;">12,630,214</div>
<div class="t" style="top:754.50px;font-size:11px;font-weight:400;color:#000;line-height:20px;left:859.30px;width:400px;text-align:right;">(1,190,529)</div>
<div class="t" style="top:754.50px;font-size:11px;font-weight:400;color:#ff0000;line-height:20px;left:922.70px;width:400px;text-align:right;"><svg style="position:relative;display:inline-block;vertical-align:baseline;margin-right:1.2px" width="8.6" height="7" viewBox="0 0 8.6 7"><path d="M0 0L4.3 7L8.6 0Z" fill="#ff0000"/></svg>10.41%</div>
<div class="t" style="top:772.50px;font-size:11px;font-weight:400;color:#7f7f7f;line-height:20px;left:-157.00px;width:400px;text-align:right;">4040</div>
<div class="t" style="top:772.50px;font-size:11px;font-weight:400;color:#000;line-height:20px;letter-spacing:-0.213px;left:279.40px;">Discounts Taken</div>
<div class="t" style="top:772.50px;font-size:11px;font-weight:400;color:#000;line-height:20px;left:115.50px;width:400px;text-align:right;">36</div>
<div class="t" style="top:772.50px;font-size:11px;font-weight:400;color:#000;line-height:20px;left:186.50px;width:400px;text-align:right;">-</div>
<div class="t" style="top:772.50px;font-size:11px;font-weight:400;color:#000;line-height:20px;left:284.00px;width:400px;text-align:right;">36</div>
<div class="t" style="top:772.50px;font-size:11px;font-weight:400;color:#000;line-height:20px;left:362.00px;width:400px;text-align:right;">-</div>
<div class="t" style="top:772.50px;font-size:11px;font-weight:400;color:#000;line-height:20px;left:445.50px;width:400px;text-align:right;">13,498</div>
<div class="t" style="top:772.50px;font-size:11px;font-weight:400;color:#000;line-height:20px;left:526.00px;width:400px;text-align:right;">12,000</div>
<div class="t" style="top:772.50px;font-size:11px;font-weight:400;color:#000;line-height:20px;left:613.70px;width:400px;text-align:right;">1,498</div>
<div class="t" style="top:772.50px;font-size:11px;font-weight:400;color:#000;line-height:20px;left:693.30px;width:400px;text-align:right;"><svg style="position:relative;display:inline-block;vertical-align:baseline;margin-right:1.2px" width="8.6" height="7" viewBox="0 0 8.6 7"><path d="M0 7L4.3 0L8.6 7Z" fill="#000"/></svg>11.09%</div>
<div class="t" style="top:772.50px;font-size:11px;font-weight:400;color:#000;line-height:20px;left:772.50px;width:400px;text-align:right;">12,950</div>
<div class="t" style="top:772.50px;font-size:11px;font-weight:400;color:#000;line-height:20px;left:855.70px;width:400px;text-align:right;">548</div>
<div class="t" style="top:772.50px;font-size:11px;font-weight:400;color:#000;line-height:20px;left:922.70px;width:400px;text-align:right;"><svg style="position:relative;display:inline-block;vertical-align:baseline;margin-right:1.2px" width="8.6" height="7" viewBox="0 0 8.6 7"><path d="M0 7L4.3 0L8.6 7Z" fill="#000"/></svg>4.06%</div>
<div class="t" style="top:790.50px;font-size:11px;font-weight:400;color:#7f7f7f;line-height:20px;left:-157.00px;width:400px;text-align:right;">4091</div>
<div class="t" style="top:790.50px;font-size:11px;font-weight:400;color:#000;line-height:20px;letter-spacing:-0.351px;left:279.40px;">Federal Tax Expense</div>
<div class="t" style="top:790.50px;font-size:11px;font-weight:400;color:#000;line-height:20px;left:104.50px;width:400px;text-align:right;">-</div>
<div class="t" style="top:790.50px;font-size:11px;font-weight:400;color:#000;line-height:20px;left:186.50px;width:400px;text-align:right;">-</div>
<div class="t" style="top:790.50px;font-size:11px;font-weight:400;color:#000;line-height:20px;left:273.00px;width:400px;text-align:right;">-</div>
<div class="t" style="top:790.50px;font-size:11px;font-weight:400;color:#000;line-height:20px;left:362.00px;width:400px;text-align:right;">-</div>
<div class="t" style="top:790.50px;font-size:11px;font-weight:400;color:#000;line-height:20px;left:445.50px;width:400px;text-align:right;">35,789</div>
<div class="t" style="top:790.50px;font-size:11px;font-weight:400;color:#000;line-height:20px;left:526.00px;width:400px;text-align:right;">40,000</div>
<div class="t" style="top:790.50px;font-size:11px;font-weight:400;color:#000;line-height:20px;left:617.30px;width:400px;text-align:right;">(4,211)</div>
<div class="t" style="top:790.50px;font-size:11px;font-weight:400;color:#ff0000;line-height:20px;left:693.30px;width:400px;text-align:right;"><svg style="position:relative;display:inline-block;vertical-align:baseline;margin-right:1.2px" width="8.6" height="7" viewBox="0 0 8.6 7"><path d="M0 0L4.3 7L8.6 0Z" fill="#ff0000"/></svg>11.77%</div>
<div class="t" style="top:790.50px;font-size:11px;font-weight:400;color:#000;line-height:20px;left:772.50px;width:400px;text-align:right;">35,988</div>
<div class="t" style="top:790.50px;font-size:11px;font-weight:400;color:#000;line-height:20px;left:859.30px;width:400px;text-align:right;">(199)</div>
<div class="t" style="top:790.50px;font-size:11px;font-weight:400;color:#ff0000;line-height:20px;left:922.70px;width:400px;text-align:right;"><svg style="position:relative;display:inline-block;vertical-align:baseline;margin-right:1.2px" width="8.6" height="7" viewBox="0 0 8.6 7"><path d="M0 0L4.3 7L8.6 0Z" fill="#ff0000"/></svg>0.56%</div>
<div class="t" style="top:808.50px;font-size:11px;font-weight:400;color:#7f7f7f;line-height:20px;left:-157.00px;width:400px;text-align:right;">4092</div>
<div class="t" style="top:808.50px;font-size:11px;font-weight:400;color:#000;line-height:20px;letter-spacing:-0.376px;left:279.40px;">State Taxes Payable</div>
<div class="t" style="top:808.50px;font-size:11px;font-weight:400;color:#000;line-height:20px;left:104.50px;width:400px;text-align:right;">-</div>
<div class="t" style="top:808.50px;font-size:11px;font-weight:400;color:#000;line-height:20px;left:186.50px;width:400px;text-align:right;">-</div>
<div class="t" style="top:808.50px;font-size:11px;font-weight:400;color:#000;line-height:20px;left:273.00px;width:400px;text-align:right;">-</div>
<div class="t" style="top:808.50px;font-size:11px;font-weight:400;color:#000;line-height:20px;left:362.00px;width:400px;text-align:right;">-</div>
<div class="t" style="top:808.50px;font-size:11px;font-weight:400;color:#000;line-height:20px;left:445.50px;width:400px;text-align:right;">21,537</div>
<div class="t" style="top:808.50px;font-size:11px;font-weight:400;color:#000;line-height:20px;left:526.00px;width:400px;text-align:right;">25,000</div>
<div class="t" style="top:808.50px;font-size:11px;font-weight:400;color:#000;line-height:20px;left:617.30px;width:400px;text-align:right;">(3,463)</div>
<div class="t" style="top:808.50px;font-size:11px;font-weight:400;color:#ff0000;line-height:20px;left:693.30px;width:400px;text-align:right;"><svg style="position:relative;display:inline-block;vertical-align:baseline;margin-right:1.2px" width="8.6" height="7" viewBox="0 0 8.6 7"><path d="M0 0L4.3 7L8.6 0Z" fill="#ff0000"/></svg>16.08%</div>
<div class="t" style="top:808.50px;font-size:11px;font-weight:400;color:#000;line-height:20px;left:772.50px;width:400px;text-align:right;">22,145</div>
<div class="t" style="top:808.50px;font-size:11px;font-weight:400;color:#000;line-height:20px;left:859.30px;width:400px;text-align:right;">(608)</div>
<div class="t" style="top:808.50px;font-size:11px;font-weight:400;color:#ff0000;line-height:20px;left:922.70px;width:400px;text-align:right;"><svg style="position:relative;display:inline-block;vertical-align:baseline;margin-right:1.2px" width="8.6" height="7" viewBox="0 0 8.6 7"><path d="M0 0L4.3 7L8.6 0Z" fill="#ff0000"/></svg>2.82%</div>
<div class="r" style="left:114px;top:826.5px;width:1211px;height:2px;background:#595959;"></div>
<div class="r" style="left:114px;top:828.5px;width:1211px;height:16px;background:#ddebf7;"></div>
<div class="r" style="left:114px;top:844.5px;width:1211px;height:2px;background:#000;"></div>
<div class="t" style="top:826.50px;font-size:10.3px;font-weight:700;color:#000;line-height:20px;letter-spacing:-0.453px;left:115.80px;">TOTAL COST OF GOODS SOLD</div>
<div class="t" style="top:826.50px;font-size:11px;font-weight:700;color:#000;line-height:20px;left:115.50px;width:400px;text-align:right;">874,891</div>
<div class="t" style="top:826.50px;font-size:11px;font-weight:700;color:#000;line-height:20px;left:197.50px;width:400px;text-align:right;">890,000</div>
<div class="t" style="top:826.50px;font-size:11px;font-weight:700;color:#000;line-height:20px;left:287.60px;width:400px;text-align:right;">(15,109)</div>
<div class="t" style="top:826.50px;font-size:11px;font-weight:700;color:#ff0000;line-height:20px;left:362.00px;width:400px;text-align:right;"><svg style="position:relative;display:inline-block;vertical-align:baseline;margin-right:1.2px" width="8.6" height="7" viewBox="0 0 8.6 7"><path d="M0 0L4.3 7L8.6 0Z" fill="#ff0000"/></svg>1.73%</div>
<div class="t" style="top:826.50px;font-size:11px;font-weight:700;color:#000;line-height:20px;left:445.50px;width:400px;text-align:right;">11,510,508</div>
<div class="t" style="top:826.50px;font-size:11px;font-weight:700;color:#000;line-height:20px;left:526.00px;width:400px;text-align:right;">12,577,000</div>
<div class="t" style="top:826.50px;font-size:11px;font-weight:700;color:#000;line-height:20px;left:617.30px;width:400px;text-align:right;">(1,066,492)</div>
<div class="t" style="top:826.50px;font-size:11px;font-weight:700;color:#ff0000;line-height:20px;left:693.30px;width:400px;text-align:right;"><svg style="position:relative;display:inline-block;vertical-align:baseline;margin-right:1.2px" width="8.6" height="7" viewBox="0 0 8.6 7"><path d="M0 0L4.3 7L8.6 0Z" fill="#ff0000"/></svg>9.27%</div>
<div class="t" style="top:826.50px;font-size:11px;font-weight:700;color:#000;line-height:20px;left:772.50px;width:400px;text-align:right;">12,701,297</div>
<div class="t" style="top:826.50px;font-size:11px;font-weight:700;color:#000;line-height:20px;left:859.30px;width:400px;text-align:right;">(1,190,789)</div>
<div class="t" style="top:826.50px;font-size:11px;font-weight:700;color:#ff0000;line-height:20px;left:922.70px;width:400px;text-align:right;"><svg style="position:relative;display:inline-block;vertical-align:baseline;margin-right:1.2px" width="8.6" height="7" viewBox="0 0 8.6 7"><path d="M0 0L4.3 7L8.6 0Z" fill="#ff0000"/></svg>10.35%</div>
<div class="t" style="top:826.50px;font-size:11px;font-weight:700;color:#000;line-height:20px;left:439.50px;">$</div>
<div class="t" style="top:826.50px;font-size:11px;font-weight:700;color:#000;line-height:20px;left:526.00px;">$</div>
<div class="t" style="top:826.50px;font-size:11px;font-weight:700;color:#000;line-height:20px;left:608.00px;">$</div>
<div class="t" style="top:826.50px;font-size:11px;font-weight:700;color:#000;line-height:20px;left:769.00px;">$</div>
<div class="t" style="top:826.50px;font-size:11px;font-weight:700;color:#000;line-height:20px;left:856.00px;">$</div>
<div class="t" style="top:826.50px;font-size:11px;font-weight:700;color:#000;line-height:20px;left:936.00px;">$</div>
<div class="t" style="top:826.50px;font-size:11px;font-weight:700;color:#000;line-height:20px;left:1099.50px;">$</div>
<div class="t" style="top:826.50px;font-size:11px;font-weight:700;color:#000;line-height:20px;left:1182.50px;">$</div>
</div>
</body></html>
